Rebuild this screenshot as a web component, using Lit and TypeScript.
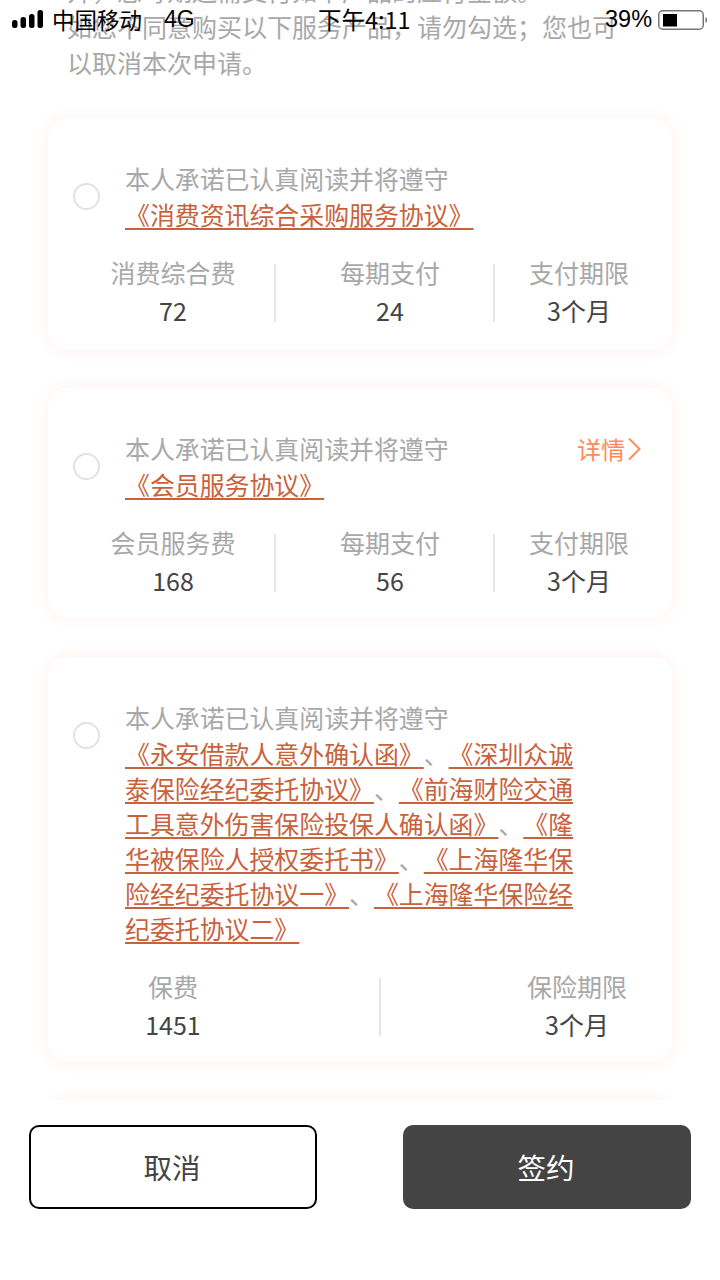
import { LitElement, html, css } from "lit";
import { customElement } from "lit/decorators.js";

@customElement("app-root")
export class AppRoot extends LitElement {
  static styles = css`
    :host {
      display: block;
      position: relative;
      width: 720px;
      height: 1280px;
      overflow: hidden;
      background: #fff;
      font-family: "Noto Sans CJK SC", "Liberation Sans", sans-serif;
      text-spacing-trim: space-all;
      font-kerning: none;
    }
    .status {
      position: absolute;
      inset: 0 0 auto 0;
      height: 40px;
      color: #000;
      font-size: 22.5px;
      line-height: 39px;
    }
    .status span, .status svg { position: absolute; top: 0; }
    .status svg { top: 10px; }
    .bars { left: 12px; }
    .battery { left: 658px; }
    .carrier { left: 52px; }
    .net { left: 164px; font-family: "Liberation Sans", sans-serif; font-size: 23px; }
    .time { left: 318px; font-size: 23.5px; }
    .pct { left: 605px; font-family: "Liberation Sans", sans-serif; font-size: 23.5px; }
    main {
      height: 1100px;
      overflow: hidden;
    }
    .intro {
      margin: -28px 0 0;
      padding: 0 67px;
      font-size: 25px;
      line-height: 36px;
      color: #a8a8a8;
      height: 110px;
      white-space: nowrap;
      box-sizing: content-box;
    }
    .intro + .card { margin-top: 36px; }
    .card {
      position: relative;
      margin: 38px 48px 0;
      padding: 43px 0 0 77px;
      border-radius: 20px;
      background: #fff;
      box-shadow: 0 0 14px rgba(255, 130, 80, 0.12);
      box-sizing: border-box;
    }
    .c1 { height: 232px; }
    .c2 { height: 230px; margin-top: 38px; }
    .c3 { height: 405px; margin-top: 39px; }
    .c4 { height: 200px; }
    .radio {
      position: absolute;
      left: 25px;
      top: 65px;
      width: 27px;
      height: 27px;
      box-sizing: border-box;
      border: 2px solid #e2e2e2;
      border-radius: 50%;
    }
    .text {
      width: 452px;
      font-size: 24.9px;
      line-height: 35px;
      color: #a8a8a8;
    }
    .lead { margin-bottom: 1px; }
    .text a {
      color: #c9623c;
      text-decoration: underline;
      text-decoration-thickness: 2px;
      text-underline-offset: 3px;
    }
    .sep { color: #a8a8a8; }
    .detail {
      position: absolute;
      right: 31px;
      top: 43px;
      display: flex;
      align-items: center;
      gap: 2px;
      color: #ff8a5c;
      font-size: 24px;
      line-height: 36px;
    }
    .stats {
      display: flex;
      align-items: flex-start;
      margin: 22px 0 0 -15px;
    }
    .stat { text-align: center; flex: none; }
    .w5 { width: 126px; }
    .w4 { width: 100px; }
    .label {
      font-size: 25px;
      line-height: 36px;
      color: #a8a8a8;
      white-space: nowrap;
    }
    .value {
      margin-top: 2px;
      font-size: 25px;
      line-height: 36px;
      color: #444;
      white-space: nowrap;
    }
    .div {
      flex: none;
      width: 2px;
      height: 58px;
      background: #e6e6e6;
    }
    .d1 { margin: 10px 64px 0 38px; }
    .d2 { margin: 10px 34px 0 53px; }
    .d3 { margin: 10px 146px 0 143px; }
    footer {
      display: flex;
      justify-content: space-between;
      padding: 25px 29px 0;
      height: 180px;
      box-sizing: border-box;
    }
    button {
      width: 288px;
      height: 84px;
      border-radius: 10px;
      font: inherit;
      font-size: 28.5px;
      padding: 0 2px 2px 0;
      box-sizing: border-box;
    }
    .cancel { background: #fff; border: 2px solid #000; color: #444; }
    .sign { background: #444; border: none; color: #fff; }
  `;

  private stat(label: string, value: string, w: string) {
    return html`<div class="stat ${w}">
      <div class="label">${label}</div>
      <div class="value">${value}</div>
    </div>`;
  }

  render() {
    return html`
      <main>
        <div class="intro">
          <div>开，您每期还需支付如下产品的应付金额。</div>
          <div>如您不同意购买以下服务产品，请勿勾选；您也可</div>
          <div>以取消本次申请。</div>
        </div>

        <section class="card c1">
          <div class="radio"></div>
          <div class="text">
            <div class="lead">本人承诺已认真阅读并将遵守</div>
            <a>《消费资讯综合采购服务协议》</a>
          </div>
          <div class="stats">
            ${this.stat("消费综合费", "72", "w5")}
            <div class="div d1"></div>
            ${this.stat("每期支付", "24", "w4")}
            <div class="div d2"></div>
            ${this.stat("支付期限", "3个月", "w4")}
          </div>
        </section>

        <section class="card c2">
          <div class="radio"></div>
          <div class="detail">
            详情<svg width="14" height="24" viewBox="0 0 14 24" fill="none" stroke="#ff8a5c" stroke-width="2"><path d="M2 1.5 12.5 12 2 22.5" /></svg>
          </div>
          <div class="text">
            <div class="lead">本人承诺已认真阅读并将遵守</div>
            <a>《会员服务协议》</a>
          </div>
          <div class="stats">
            ${this.stat("会员服务费", "168", "w5")}
            <div class="div d1"></div>
            ${this.stat("每期支付", "56", "w4")}
            <div class="div d2"></div>
            ${this.stat("支付期限", "3个月", "w4")}
          </div>
        </section>

        <section class="card c3">
          <div class="radio"></div>
          <div class="text">
            <div class="lead">本人承诺已认真阅读并将遵守</div>
            <a>《永安借款人意外确认函》</a><span class="sep">、</span><a>《深圳众诚泰保险经纪委托协议》</a><span class="sep">、</span><a>《前海财险交通工具意外伤害保险投保人确认函》</a><span class="sep">、</span><a>《隆华被保险人授权委托书》</a><span class="sep">、</span><a>《上海隆华保险经纪委托协议一》</a><span class="sep">、</span><a>《上海隆华保险经纪委托协议二》</a>
          </div>
          <div class="stats">
            ${this.stat("保费", "1451", "w5")}
            <div class="div d3"></div>
            ${this.stat("保险期限", "3个月", "w4")}
          </div>
        </section>

        <section class="card c4"></section>
      </main>

      <footer>
        <button class="cancel">取消</button>
        <button class="sign">签约</button>
      </footer>

      <div class="status">
        <svg class="bars" width="32" height="20" viewBox="0 0 32 20" fill="#000">
          <rect x="0" y="10" width="5.5" height="8" rx="2.5" />
          <rect x="8.5" y="7" width="5.5" height="11" rx="2.5" />
          <rect x="17" y="4" width="5.5" height="14" rx="2.5" />
          <rect x="25.5" y="0" width="5.5" height="18" rx="2.5" />
        </svg>
        <span class="carrier">中国移动</span>
        <span class="net">4G</span>
        <span class="time">下午4:11</span>
        <span class="pct">39%</span>
        <svg class="battery" width="51" height="20" viewBox="0 0 51 20" fill="none">
          <rect x="0.75" y="0.75" width="44.5" height="18.5" rx="4" stroke="#777" stroke-width="1.5" />
          <rect x="5" y="4" width="14" height="12.5" fill="#000" />
          <path d="M47.5 7c1.2.6 1.6 1.8 1.6 3s-.4 2.4-1.6 3z" fill="#777" />
        </svg>
      </div>
    `;
  }
}
